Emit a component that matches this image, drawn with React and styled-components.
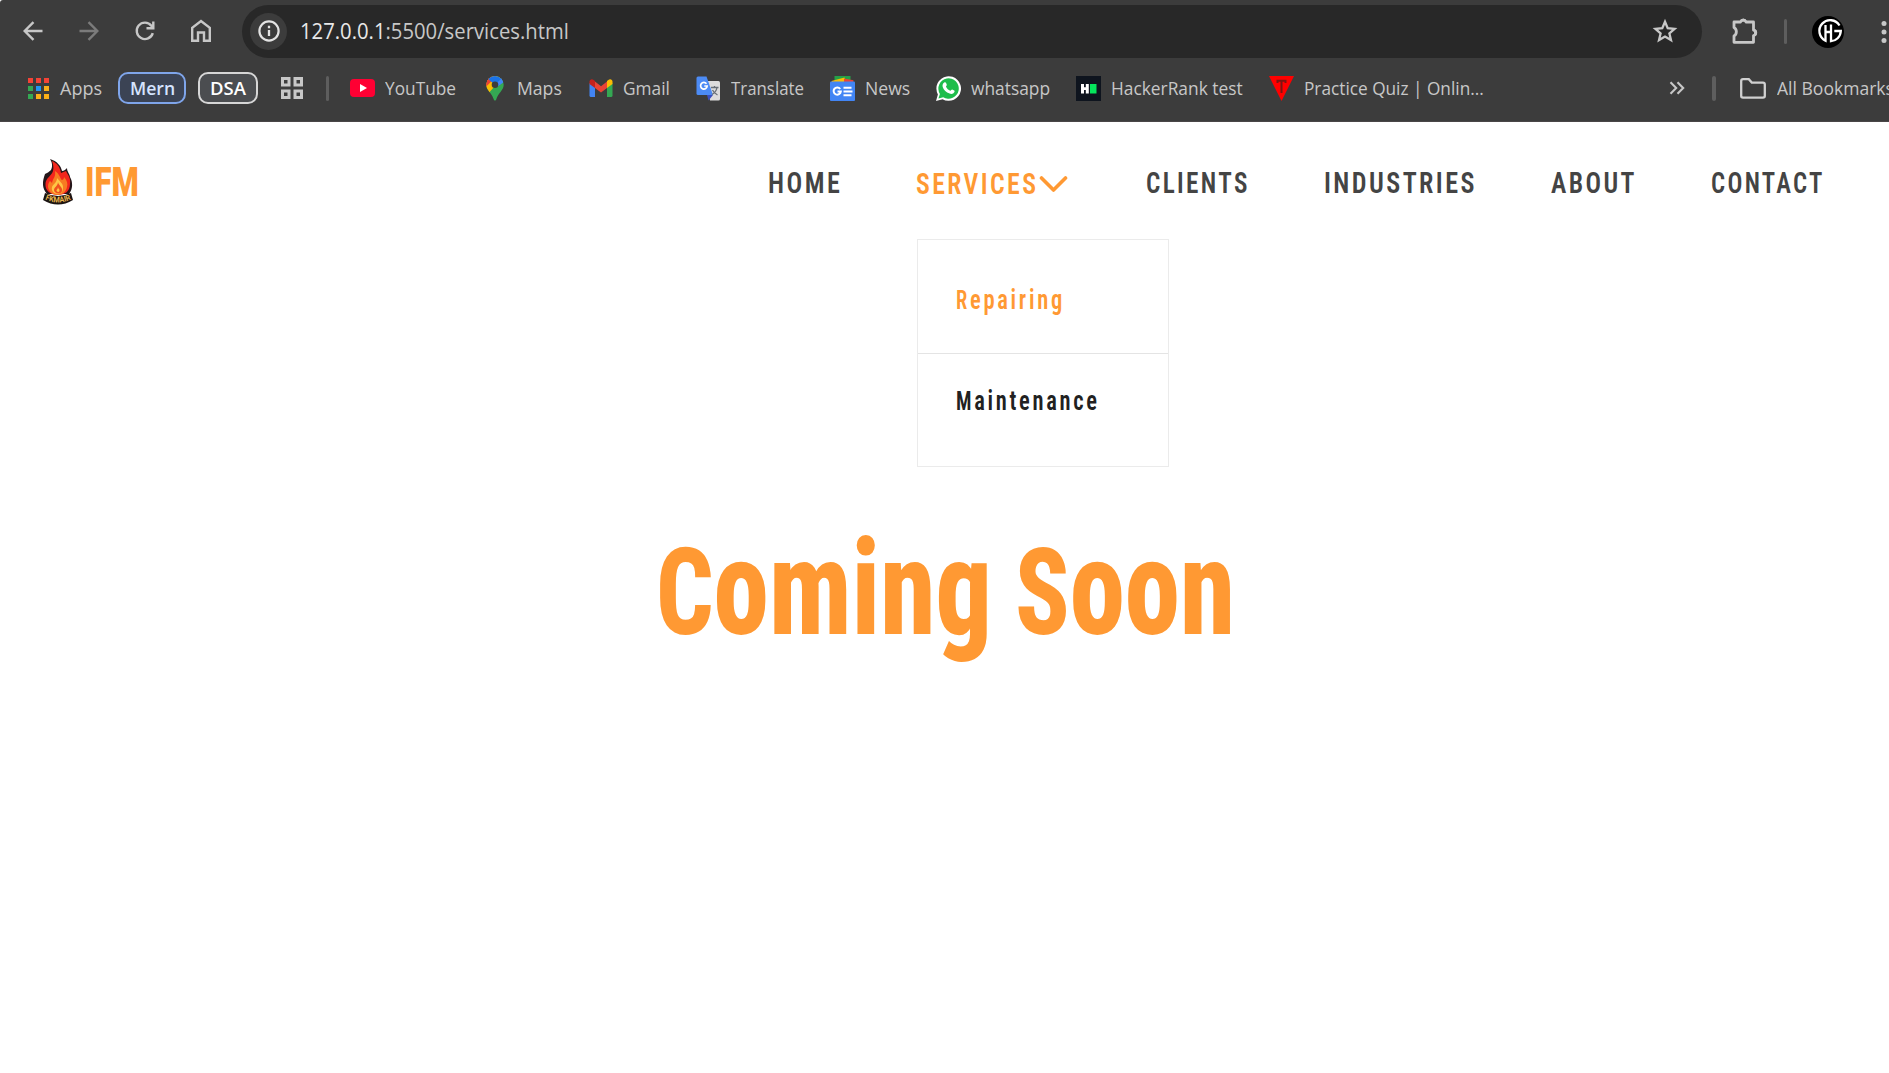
import React, { useLayoutEffect, useRef, useState } from "react";
import styled, { createGlobalStyle } from "styled-components";

const Global = createGlobalStyle`
  * { box-sizing: border-box; }
  html, body { margin: 0; background: #fff; overflow: hidden; }
  body { font-family: "Open Sans", "Noto Sans", sans-serif; }
  svg { flex: none; }
`;

/* Text squeezed horizontally so it fills a known column width. */
const FitBox = styled.span`
  display: block;
  flex: none;
  width: ${(p) => p.$w}px;
  white-space: nowrap;
`;
const FitInner = styled.span`
  display: inline-block;
  transform-origin: 0 50%;
`;
function Fit({ w, children, className }) {
  const ref = useRef(null);
  const [k, setK] = useState(1);
  useLayoutEffect(() => {
    setK(w / ref.current.offsetWidth);
  }, [w]);
  return (
    <FitBox $w={w} className={className}>
      <FitInner ref={ref} style={{ transform: `scaleX(${k})` }}>{children}</FitInner>
    </FitBox>
  );
}

const Chrome = styled.header`
  height: 122px;
  background: #3c3c3c;
  border-bottom: 1px solid #4a4647;
  border-top-left-radius: 3px;
  overflow: hidden;
`;
const Toolbar = styled.div`
  display: flex;
  align-items: center;
  height: 53px;
  margin-top: 5px;
  padding-left: 19px;
  color: #c7c7c7;
`;
const NavButton = styled.span`
  display: grid;
  place-items: center;
  width: 28px;
  height: 28px;
  margin: -1px 28px 0 0;
  color: ${(p) => (p.$dim ? "#7b7b7b" : "#c7c7c7")};
`;
const Omnibox = styled.div`
  display: flex;
  align-items: center;
  width: 1460px;
  height: 53px;
  margin-left: -1px;
  padding: 0 24px 1px 8px;
  border-radius: 27px;
  background: #282828;
`;
const InfoBadge = styled.span`
  display: grid;
  place-items: center;
  width: 37px;
  height: 37px;
  margin-right: 13px;
  border-radius: 50%;
  background: #3c3c3c;
  color: #e3e3e3;
`;
const Url = styled(Fit)`
  font-size: 22px;
  line-height: 30px;
  color: #c7c7c7;
  margin: -3px auto 0 0;
  b { font-weight: 400; color: #e8e8e8; }
`;
const Extension = styled.span`
  display: flex;
  margin: -2px 0 0 29px;
`;
const Divider = styled.span`
  flex: none;
  width: ${(p) => p.$w || 3}px;
  height: 25px;
  border-radius: 2px;
  background: #5e5e5e;
  margin: ${(p) => p.$m};
`;
const MenuDots = styled.svg`
  flex: none;
  margin-left: 36px;
`;

const Bookmarks = styled.nav`
  display: flex;
  align-items: center;
  height: 60px;
  padding-left: 26px;
`;
const Label = styled(Fit)`
  font-size: 18px;
  line-height: 26px;
  color: #c7c7c7;
`;
const Chip = styled.span`
  display: flex;
  align-items: center;
  justify-content: center;
  flex: none;
  width: ${(p) => p.$w}px;
  height: 32px;
  margin-left: ${(p) => p.$gap}px;
  border: 2px solid ${(p) => (p.$blue ? "#7fa5ea" : "#d6d6d6")};
  border-radius: 10px;
  background: ${(p) => (p.$blue ? "#3b4354" : "#4b4d50")};
`;
const ChipText = styled(Fit)`
  font-size: 18px;
  font-weight: 600;
  line-height: 26px;
  color: ${(p) => (p.$blue ? "#d5e4ff" : "#fff")};
`;
const Sites = styled.div`
  display: flex;
  flex: none;
  gap: 26px;
`;
const Site = styled.span`
  display: flex;
  align-items: center;
  gap: 10px;
`;
const Slot = styled.span`
  display: grid;
  place-items: center;
  width: 25px;
  height: 26px;
`;
const Spaced = styled.span`
  display: flex;
  flex: none;
  color: #c7c7c7;
  margin-left: ${(p) => p.$l}px;
  margin-right: ${(p) => p.$r || 0}px;
`;

const SiteHeader = styled.div`
  display: flex;
  align-items: flex-start;
  height: 122px;
  padding: 0 64px 0 42px;
`;
const Brand = styled.div`
  display: flex;
  align-items: center;
  gap: 11px;
  margin: 36px auto 0 0;
`;
const BrandName = styled(Fit)`
  font: 900 41px/48px Roboto, sans-serif;
  color: #ff9933;
`;
const Menu = styled.nav`
  display: flex;
  align-items: flex-start;
  margin-top: 44px;
`;
const MenuItem = styled.span`
  position: relative;
  display: flex;
  align-items: center;
  height: 34px;
  margin-left: ${(p) => p.$gap || 0}px;
  margin-top: ${(p) => (p.$active ? 1 : 0)}px;
  color: ${(p) => (p.$active ? "#ff9933" : "#444444")};
`;
const MenuText = styled(Fit)`
  font: 600 30px/34px Roboto, sans-serif;
  font-stretch: 75%;
  letter-spacing: 2.8px;
`;
const Dropdown = styled.div`
  position: absolute;
  top: 72px;
  left: 1px;
  width: 252px;
  border: 1px solid #ebebeb;
  background: #fff;
`;
const Option = styled.div`
  height: ${(p) => p.$h}px;
  padding: ${(p) => p.$top}px 0 0 38px;
  border-bottom: ${(p) => (p.$line ? "1px solid #e4e4e4" : "0")};
  color: ${(p) => (p.$active ? "#ff9933" : "#212121")};
`;
const OptionText = styled(Fit)`
  font: 600 27.5px/32px Roboto, sans-serif;
  font-stretch: 75%;
  letter-spacing: 3.3px;
  > span::first-letter { font-size: 25px; }
`;
const Hero = styled.main`
  display: flex;
  justify-content: center;
  gap: 23px;
  padding: 265px 0 0 2px;
`;
const HeroWord = styled(Fit)`
  font: 800 133px/160px Roboto, sans-serif;
  font-stretch: 75%;
  color: #ff9933;
  > span::first-letter { font-size: 120px; }
`;

const line = { fill: "none", stroke: "currentColor", strokeWidth: 2.4 };

const Back = () => (
  <svg width="22" height="22" viewBox="0 0 22 22" {...line}><path d="M20.500 11H3M11.500 2.200L2.700 11l8.800 8.800" /></svg>
);
const Forward = () => (
  <svg width="22" height="22" viewBox="0 0 22 22" {...line}><path d="M1.500 11H19M10.500 2.200L19.300 11l-8.800 8.800" /></svg>
);
const Reload = () => (
  <svg width="22" height="22" viewBox="0 0 22 22" {...line}><path d="M18.800 13.200A8.200 8.200 0 1 1 17.400 5.800L19 8M19.300 1.500V8.200H12.500" /></svg>
);
const Home = () => (
  <svg width="24" height="26" viewBox="0 0 24 26" {...line}><path d="M3.200 22.800V9.800L12 3l8.800 6.800V22.800H15V14.500H9V22.800Z" /></svg>
);
const Info = () => (
  <svg width="24" height="24" viewBox="0 0 24 24" {...line}><circle cx="12" cy="12" r="9.600" strokeWidth="2.200" /><path d="M12 11v6M12 6.800v2.400" strokeWidth="2.300" /></svg>
);
const Star = () => (
  <svg width="26" height="26" viewBox="0 0 26 26" {...line} strokeWidth="2.300"><path d="M13 3.800L15.700 10.200L22.600 10.800L17.400 15.400L19 22.100L13 18.500L7 22.100L8.600 15.400L3.400 10.800L10.300 10.200Z" /></svg>
);
const Puzzle = () => (
  <svg width="28" height="28" viewBox="0 0 28 28"><path d="M4.500 5H9.500a3 3 0 0 1 5.500 0H22.500v8a2.800 2.800 0 0 1 0 5.500v6.800H3V19a5 5 0 0 0 0-8.500V5Z" fill="none" stroke="#c7c7c7" strokeWidth="2.800" strokeLinejoin="round" /><path d="M9.500 4.500a3 3 0 0 1 5.600 0M23 13a2.800 2.800 0 0 1 0 5.400" fill="#c7c7c7" stroke="#c7c7c7" strokeWidth="2" /></svg>
);
const Avatar = () => (
  <svg width="32" height="32" viewBox="0 0 32 32"><circle cx="16" cy="16" r="16" fill="#000" /><g fill="none" stroke="#fff" strokeWidth="2.300"><path d="M27.500 9.500A10.800 10.800 0 1 0 13.500 24.700V9" /><path d="M13.500 16H19M19 8.500V25.200C24 25 28.500 21 28.800 15H22.300" /></g></svg>
);
const Apps = () => {
  const colors = ["#f44336", "#f44336", "#f44336", "#34a853", "#2196f3", "#fbb018", "#34a853", "#fbb018", "#fbb018"];
  return (
    <svg width="25" height="25" viewBox="0 0 25 25">
      {colors.map((c, i) => <rect key={i} x={2 + (i % 3) * 8} y={2 + Math.floor(i / 3) * 8} width="5" height="5" fill={c} />)}
    </svg>
  );
};
const TabGrid = () => (
  <svg width="24" height="24" viewBox="0 0 24 24" fill="none" stroke="#c7c7c7" strokeWidth="3"><path d="M2.500 2.500h6.500v6.500h-6.500zM15 2.500h6.500v6.500H15zM2.500 15h6.500v6.500h-6.500zM15 15h6.500v6.500H15z" /></svg>
);
const YouTube = () => (
  <svg width="25" height="18" viewBox="0 0 25 18"><rect width="25" height="18" rx="4" fill="#ff0033" /><path d="M10 5l7 4-7 4z" fill="#fff" /></svg>
);
const Maps = () => (
  <svg width="18" height="25" viewBox="0 0 18 25">
    <clipPath id="pin"><path d="M9 0a8.700 8.700 0 0 1 8.700 8.700c0 5.500-5.400 8-7.400 14.600-.4 1.600-2.200 1.600-2.600 0C5.700 16.700.3 14.200.3 8.700A8.700 8.700 0 0 1 9 0z" /></clipPath>
    <g clipPath="url(#pin)"><path d="M0 0h18v25H0z" fill="#34a853" /><path d="M0 20L18 0H0z" fill="#fbbc04" /><path d="M-1 11.500L9 1 5 0H-2z" fill="#ea4335" /><path d="M-1 11.500L7.500 3.500 2 2-2 6z" fill="#ea4335" /><path d="M2.300 3.200L9 8.700 17 3.500V-1H3z" fill="#1a73e8" /><path d="M9 8.700L15.500 2.500 18 6l-7 5z" fill="#4285f4" /></g>
    <circle cx="9" cy="8.700" r="3.300" fill="#3c3c3c" />
  </svg>
);
const Gmail = () => (
  <svg width="24" height="18" viewBox="0 0 24 18"><path d="M.5 4v12.500Q.5 18 2 18h4V8z" fill="#4285f4" /><path d="M23.500 4v12.500Q23.500 18 22 18h-4V8z" fill="#34a853" /><path d="M6 2.500l6 4.700 6-4.700v6.500L12 13.500 6 9z" fill="#ea4335" /><path d="M.5 5V2.700C.5.300 3-.5 4.700.9L6 2v7z" fill="#c5221f" /><path d="M23.500 5V2.700C23.500.300 21-.5 19.300.9L18 2v7z" fill="#fbbc04" /></svg>
);
const Translate = () => (
  <svg width="25" height="25" viewBox="0 0 25 25"><path d="M11 5h11.500Q24 5 24 6.500V23q0 1.500-1.500 1.500H14z" fill="#dcdcdc" /><path d="M11 19h6l-4.500 5.500z" fill="#3a4fc0" /><path d="M2 .5h8.500L17 19H2Q.5 19 .5 17.500V2Q.5.5 2 .5z" fill="#4c8bf5" /><path d="M10.500 7.700A3.300 3.300 0 1 0 11.200 10H8.300" fill="none" stroke="#fff" strokeWidth="1.700" /><path d="M15 11.500h7.500M18.500 10v1.500M21 11.500c-.5 3-2.500 5.500-5 7M16.500 14c1 2 3 4 5 5" fill="none" stroke="#687078" strokeWidth="1.300" /></svg>
);
const News = () => (
  <svg width="25" height="25" viewBox="0 0 25 25"><path d="M4.500 0h16v6h-16z" fill="#24a148" /><path d="M1.500 5l13-3.500 2 5H2z" fill="#fbbc04" /><path d="M14 2.500l9.500 1.800-.5 3H14z" fill="#ea4335" /><rect y="5.500" width="25" height="19.500" rx="1" fill="#4285f4" /><path d="M10.200 13A3.600 3.600 0 1 0 10.800 15.500H7.500" fill="none" stroke="#fff" strokeWidth="2" /><path d="M13.500 11.800h8M13.500 15.500h9M13.500 19.200h8" stroke="#fff" strokeWidth="2" /></svg>
);
const WhatsApp = () => (
  <svg width="25" height="25" viewBox="0 0 25 25"><path d="M0 25l1.900-6.600A12.300 12.300 0 1 1 6.600 23.200z" fill="#fff" /><path d="M2.400 22.600l1.500-4.700A10.200 10.200 0 1 1 7.200 21.200z" fill="#1fbd4b" /><path d="M8.600 6.200c.6-.2 1.200 0 1.400.6l.8 2c.2.600-.900 1.500-.8 1.900 1 2 2.300 3.200 4.300 4 .5.200 1.300-1.400 1.900-1.200l2 1c.5.300.5.900.2 1.600-.9 1.900-3 2.100-4.800 1.500-3.500-1.200-5.800-3.600-6.900-6.600-.6-2 .4-4.200 1.900-4.800z" fill="#fff" /></svg>
);
const HackerRank = () => (
  <svg width="25" height="25" viewBox="0 0 25 25"><path d="M0 0h25v25H0z" fill="#0e141e" /><path d="M5 8h3v3.300h1.800V8h3v9.500h-3V14H8v3.500H5z" fill="#fff" /><path d="M14 8h6.500v9.500H14z" fill="#05e55c" /></svg>
);
const Practice = () => (
  <svg width="25" height="25" viewBox="0 0 25 25"><path d="M0 0h25L12.500 25z" fill="#ff0000" /><path d="M7.500 4.800h10M8.500 4v3M16.500 4v3M12.500 5v12" fill="none" stroke="#7c1512" strokeWidth="2" /></svg>
);
const Overflow = () => (
  <svg width="16" height="14" viewBox="0 0 16 14" {...line} strokeWidth="2.100"><path d="M1.500 1.200L7.200 7l-5.700 5.800M8.500 1.200L14.200 7l-5.700 5.800" /></svg>
);
const Folder = () => (
  <svg width="26" height="21" viewBox="0 0 26 21"><path d="M3 1.200H8.800L11.800 4.600H23Q24.800 4.600 24.800 6.400V18Q24.800 19.600 23 19.600H3Q1.200 19.600 1.200 18V3Q1.200 1.200 3 1.200Z" fill="none" stroke="#d0d0d0" strokeWidth="2.300" /></svg>
);
const Chevron = () => (
  <svg width="30" height="18" viewBox="-1.500 -0.500 30 18" fill="none" stroke="currentColor" strokeWidth="3.600" strokeLinecap="round" strokeLinejoin="round"><path d="M2 2.500L14 14.500 26 2.500" /></svg>
);
const BannerText = styled.text`
  font: 700 8px Roboto, sans-serif;
  fill: #e9b44c;
`;
const Flame = () => (
  <svg width="32" height="48" viewBox="0 0 32 48">
    <path d="M8 1C15 3 19 8 20 13c2 0 4-2 5-3 0 4 3 6 3 9 3 5 3 12-1 17H5C0 30 0 24 3 16c2-1 4-2 6-4 2-4 1-8-1-11z" fill="#24161a" />
    <path d="M10 3c5 2 8 6 9 12l5-2c2 4 5 7 4 13 0 7-5 11-12 11S3 33 3.500 26c0-6 6-8 7.500-13 1-4 0-7-1-10z" fill="#f3261d" />
    <path d="M13 13c5 3 5 8 7 9 2 0 2-3 2-3 3 3 4 7 3 10-1 5-5 8-9 8-6 0-10-4-10-9 0-3 2-5 2-5l2 2c1-5 4-6 3-12z" fill="#f77b22" />
    <path d="M15 20c2 3 6 5 6 9 0 5-2 7-5 7-4 0-7-3-6-7 1-3 5-4 5-9z" fill="#ffc545" />
    <path d="M16 24c0 3 5 5 4 9-1 4-8 3-8-1 0-3 4-4 4-8z" fill="#f0501f" />
    <path d="M16 29c0 2 2 2 1.500 4-.5 1.500-3 1-3-.5 0-1 1.500-1.500 1.500-3.500z" fill="#ffc545" />
    <path d="M3 35Q16 41 29 35L31 42Q16 51 1 42Z" fill="#1b1412" />
    <path id="banner" d="M3 41.500Q16 47.500 29 41.500" fill="none" />
    <BannerText><textPath href="#banner" textLength="27" lengthAdjust="spacingAndGlyphs">FKMAIR</textPath></BannerText>
  </svg>
);

const sites = [
  [YouTube, "YouTube", 71],
  [Maps, "Maps", 45],
  [Gmail, "Gmail", 47],
  [Translate, "Translate", 73],
  [News, "News", 45],
  [WhatsApp, "whatsapp", 79],
  [HackerRank, "HackerRank test", 132],
  [Practice, "Practice Quiz | Onlin...", 180],
];

export default function App() {
  return (
    <>
      <Global />
      <Chrome>
        <Toolbar>
          <NavButton><Back /></NavButton>
          <NavButton $dim><Forward /></NavButton>
          <NavButton><Reload /></NavButton>
          <NavButton><Home /></NavButton>
          <Omnibox>
            <InfoBadge><Info /></InfoBadge>
            <Url w={269}><b>127.0.0.1</b>:5500/services.html</Url>
            <Star />
          </Omnibox>
          <Extension><Puzzle /></Extension>
          <Divider $m="0 25px 0 25px" />
          <Avatar />
          <MenuDots width="8" height="24" viewBox="0 0 8 24" fill="#c7c7c7"><circle cx="4" cy="3.500" r="2.500" /><circle cx="4" cy="12" r="2.500" /><circle cx="4" cy="20.500" r="2.500" /></MenuDots>
        </Toolbar>
        <Bookmarks>
          <Apps />
          <Spaced $l={9}><Label w={42}>Apps</Label></Spaced>
          <Chip $w={68} $gap={16} $blue><ChipText w={45} $blue>Mern</ChipText></Chip>
          <Chip $w={60} $gap={12}><ChipText w={36}>DSA</ChipText></Chip>
          <Spaced $l={22}><TabGrid /></Spaced>
          <Divider $m="0 21px 0 22px" />
          <Sites>
            {sites.map(([Icon, name, w]) => (
              <Site key={name}><Slot><Icon /></Slot><Label w={w}>{name}</Label></Site>
            ))}
          </Sites>
          <Spaced $l={185} $r={27}><Overflow /></Spaced>
          <Divider $w={4} $m="0 24px 0 0" />
          <Folder />
          <Spaced $l={11}><Label w={117}>All Bookmarks</Label></Spaced>
        </Bookmarks>
      </Chrome>
      <SiteHeader>
        <Brand>
          <Flame />
          <BrandName w={54}>IFM</BrandName>
        </Brand>
        <Menu>
          <MenuItem><MenuText w={74}>HOME</MenuText></MenuItem>
          <MenuItem $gap={74} $active>
            <MenuText w={122}>SERVICES</MenuText>
            <Chevron />
            <Dropdown>
              <Option $active $line $h={114} $top={44}><OptionText w={109}>Repairing</OptionText></Option>
              <Option $h={112} $top={31}><OptionText w={144}>Maintenance</OptionText></Option>
            </Dropdown>
          </MenuItem>
          <MenuItem $gap={78}><MenuText w={104}>CLIENTS</MenuText></MenuItem>
          <MenuItem $gap={74}><MenuText w={153}>INDUSTRIES</MenuText></MenuItem>
          <MenuItem $gap={74}><MenuText w={86}>ABOUT</MenuText></MenuItem>
          <MenuItem $gap={74}><MenuText w={114}>CONTACT</MenuText></MenuItem>
        </Menu>
      </SiteHeader>
      <Hero>
        <HeroWord w={336}>Coming</HeroWord>
        <HeroWord w={220}>Soon</HeroWord>
      </Hero>
    </>
  );
}
